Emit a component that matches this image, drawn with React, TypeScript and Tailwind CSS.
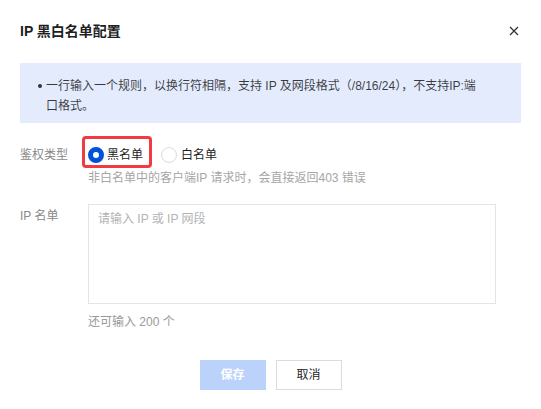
import React from "react";

export default function App() {
  return (
    <div
      className="w-[541px] h-[409px] bg-white text-[12px] text-[rgba(0,0,0,0.9)] flex flex-col"
      style={{ fontFamily: '"Liberation Sans", "Noto Sans CJK SC", sans-serif' }}
    >
      <div className="flex items-center justify-between pl-5 pr-[22px] pt-[20px] h-[42px]">
        <div className="text-[14px] font-bold leading-[22px] text-[rgba(0,0,0,0.9)]">IP 黑白名单配置</div>
        <svg width="10" height="10" viewBox="0 0 10 10" className="text-[#333]">
          <path d="M1 1 L9 9 M9 1 L1 9" stroke="currentColor" strokeWidth="1.3" />
        </svg>
      </div>

      <div className="mx-5 mt-[21px] h-[60px] bg-[#e3ebfc] pl-[18px] pt-[13px] leading-[20px] text-[rgba(0,0,0,0.75)]">
        <div className="flex">
          <span className="w-[8px] shrink-0 flex items-start pt-[8px]">
            <span className="w-[4px] h-[4px] rounded-full bg-[#333]" />
          </span>
          <div>
            <div className="whitespace-nowrap">一行输入一个规则，以换行符相隔，支持 IP 及网段格式（/8/16/24），不支持IP:端</div>
            <div>口格式。</div>
          </div>
        </div>
      </div>

      <div className="flex mt-[16px] pl-5">
        <div className="w-[68px] leading-[32px] text-[#888]">鉴权类型</div>
        <div className="flex flex-col">
          <div className="flex items-center h-[32px]">
            <div className="relative flex items-center">
              <span className="w-[16px] h-[16px] rounded-full border-[5px] border-[#0052d9] bg-white" />
              <span className="ml-[3px]">黑名单</span>
              <div className="absolute left-[-6px] top-[-10px] w-[70px] h-[32px] border-[3px] border-[#ef3b42] rounded-[4px]" />
            </div>
            <div className="flex items-center ml-[18px]">
              <span className="w-[16px] h-[16px] rounded-full border border-[#dcdcdc] bg-white" />
              <span className="ml-[4px]">白名单</span>
            </div>
          </div>
          <div className="leading-[16px] text-[#a6a6a6] -mt-[1px]">非白名单中的客户端IP 请求时，会直接返回403 错误</div>
        </div>
      </div>

      <div className="flex mt-[18px] pl-5">
        <div className="w-[68px] leading-[22px] pt-[1px] text-[#888]">IP 名单</div>
        <div className="flex flex-col">
          <div className="w-[408px] h-[100px] border border-[#e3e3e8] px-[9px] py-[4px] leading-[20px] text-[#b3b3b3]">
            请输入 IP 或 IP 网段
          </div>
          <div className="mt-[9px] leading-[18px] text-[#999]">还可输入 200 个</div>
        </div>
      </div>

      <div className="flex justify-center gap-[10px] mt-[29px]">
        <div className="w-[66px] h-[30px] bg-[#bbd3fb] text-white font-bold flex items-center justify-center">保存</div>
        <div className="w-[66px] h-[30px] border border-[#dcdcdc] bg-white flex items-center justify-center text-[rgba(0,0,0,0.9)]">取消</div>
      </div>
    </div>
  );
}
